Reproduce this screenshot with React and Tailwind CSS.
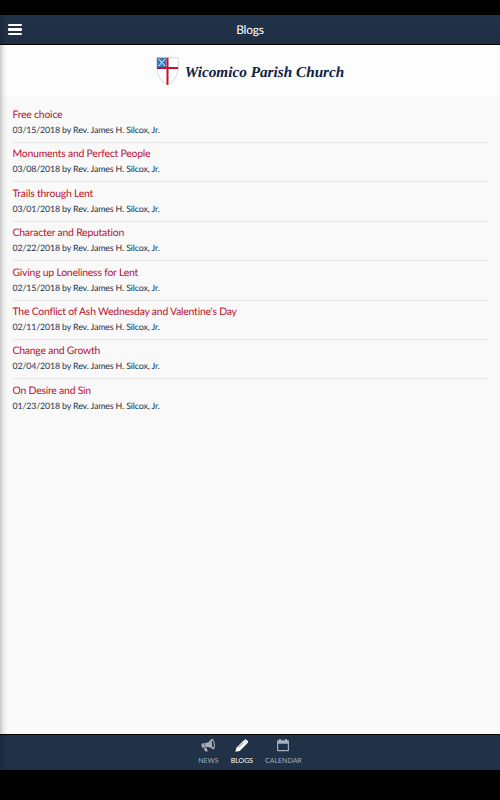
import React from "react";

const posts = [
  ["Free choice", "03/15/2018"],
  ["Monuments and Perfect People", "03/08/2018"],
  ["Trails through Lent", "03/01/2018"],
  ["Character and Reputation", "02/22/2018"],
  ["Giving up Loneliness for Lent", "02/15/2018"],
  ["The Conflict of Ash Wednesday and Valentine's Day", "02/11/2018"],
  ["Change and Growth", "02/04/2018"],
  ["On Desire and Sin", "01/23/2018"],
];

function Shield() {
  return (
    <svg className="h-[29px] w-[23px] shrink-0" viewBox="0 0 23 29">
      <path d="M.8.7H22.2V10C22.2 18.5 17.5 24.5 11.5 28C5.5 24.5.8 18.5.8 10Z" fill="#fff" stroke="#d5d5d8" strokeWidth="1" />
      <path d="M1 .8H10.4V10.2H1Z" fill="#2870b8" />
      <path d="M2.5 2L9 9M9 2L2.5 9" stroke="#dbe9f6" strokeWidth="1.3" strokeDasharray="1.6 .4" />
      <path d="M4.5 2H7M4.5 9H7M2.2 4.5V6.5M9.3 4.5V6.5" stroke="#6fa3d4" strokeWidth=".6" />
      <path d="M10.5 .8H12.5V27.5L11.5 28L10.5 27.5Z" fill="#c8102e" />
      <path d="M1 10H22.1V12H1.1Z" fill="#c8102e" />
    </svg>
  );
}

function Megaphone() {
  return (
    <svg className="h-[13px] w-[14px]" viewBox="0 0 14 13" fill="#a7aeb8">
      <g transform="rotate(-8 7 6)">
        <path d="M.6 4.4Q.6 3.6 1.4 3.6H3.6V8H1.4Q.6 8 .6 7.2Z" />
        <path d="M4.1 3.6H6Q8.8 3.3 10.7 1V10.4Q8.8 8.3 6 8H4.1Z" />
        <path d="M2.4 8.4H5L5.9 11.6Q5.9 12.2 5.3 12.2H3.9Q3.4 12.2 3.2 11.7Z" />
        <path fillRule="evenodd" d="M11.7.3C13 .3 13.9 2.8 13.9 5.7S13 11.1 11.7 11.1S9.8 8.6 9.8 5.7S10.5.3 11.7.3ZM11.9 2.2C11.2 2.2 10.9 3.9 10.9 5.7S11.2 9.2 11.9 9.2S12.8 7.5 12.8 5.7S12.5 2.2 11.9 2.2Z" />
      </g>
    </svg>
  );
}

function Pencil() {
  return (
    <svg className="h-[13px] w-[14px]" viewBox="0 0 14 13">
      <path d="M.4 12.7L1.4 8.7L8.9 1.2L12.2 4.4L4.7 11.9Z" fill="#fff" />
      <path d="M9.5.8Q10.5-.2 11.4.7L12.8 2.1Q13.7 3 12.7 4L12.3 4.3L9.1 1.2Z" fill="#fff" />
      <path d="M3.4 8.7L8.7 3.4" stroke="#203148" strokeWidth=".6" />
    </svg>
  );
}

function Calendar() {
  return (
    <svg className="h-[13px] w-[14px]" viewBox="0 0 14 13" fill="#a7aeb8">
      <path fillRule="evenodd" d="M3 0H4.8V1.3H9.2V0H11V1.3H12Q13 1.3 13 2.3V11.2Q13 12.2 12 12.2H2Q1 12.2 1 11.2V2.3Q1 1.3 2 1.3H3ZM2.2 4.8V11H11.8V4.8Z" />
    </svg>
  );
}

function Tab({ icon, label, active, className }) {
  return (
    <div className={`flex flex-col items-center ${className} ${active ? "text-white" : "text-[#a7aeb8]"}`}>
      {icon}
      <span className="mt-[4.5px] text-[7px] leading-[9px] whitespace-nowrap">{label}</span>
    </div>
  );
}

export default function App() {
  return (
    <div className="relative flex h-[800px] w-[500px] flex-col overflow-hidden bg-black font-['Lato',sans-serif] [font-variant-ligatures:none] [text-rendering:geometricPrecision]">
      <header className="mt-[15px] grid h-[30px] shrink-0 grid-cols-[1fr_auto_1fr] items-center border-b border-black bg-linear-to-b from-[#213349] to-[#202e43] text-white">
        <div className="ml-2 flex w-[14px] flex-col gap-[2px]">
          <i className="h-[2.5px] rounded-[1px] bg-white" />
          <i className="h-[2.5px] rounded-[1px] bg-white" />
          <i className="h-[2.5px] rounded-[1px] bg-white" />
        </div>
        <h1 className="pt-px text-[12px] leading-4 tracking-[-0.2px]">Blogs</h1>
      </header>
      <div className="flex h-[52px] shrink-0 items-center justify-center gap-[6px] bg-[#fdfdfd]">
        <Shield />
        <span className="pt-[3px] font-['Liberation_Serif',serif] text-[15.25px] leading-5 font-bold whitespace-nowrap text-[#0d2145] italic">Wicomico Parish Church</span>
      </div>
      <main className="flex-1 bg-[#f9f9f9] px-[12.5px] pt-[6.6px]">
        {posts.map(([title, date]) => (
          <article key={date} className="h-[39.42px] border-b border-[#e5e5e5] pt-[4.3px] last:border-0">
            <h2 className="text-[10.4px] leading-[14px] tracking-[-0.21px] text-[#b9112f]">{title}</h2>
            <p className="mt-px text-[8.8px] leading-[13px] tracking-[-0.13px] text-[#20304a]">{date} by Rev. James H. Silcox, Jr.</p>
          </article>
        ))}
      </main>
      <nav className="mb-[30px] flex h-[36px] shrink-0 justify-center border-t border-black bg-[#203148] pt-[4px]">
        <Tab icon={<Megaphone />} label="NEWS" className="mr-3" />
        <Tab icon={<Pencil />} label="BLOGS" active className="mr-3" />
        <Tab icon={<Calendar />} label="CALENDAR" className="" />
      </nav>
      <div className="absolute top-[15px] bottom-[30px] left-0 w-[8px] bg-linear-to-r from-black/20 via-black/5 to-transparent" />
    </div>
  );
}
